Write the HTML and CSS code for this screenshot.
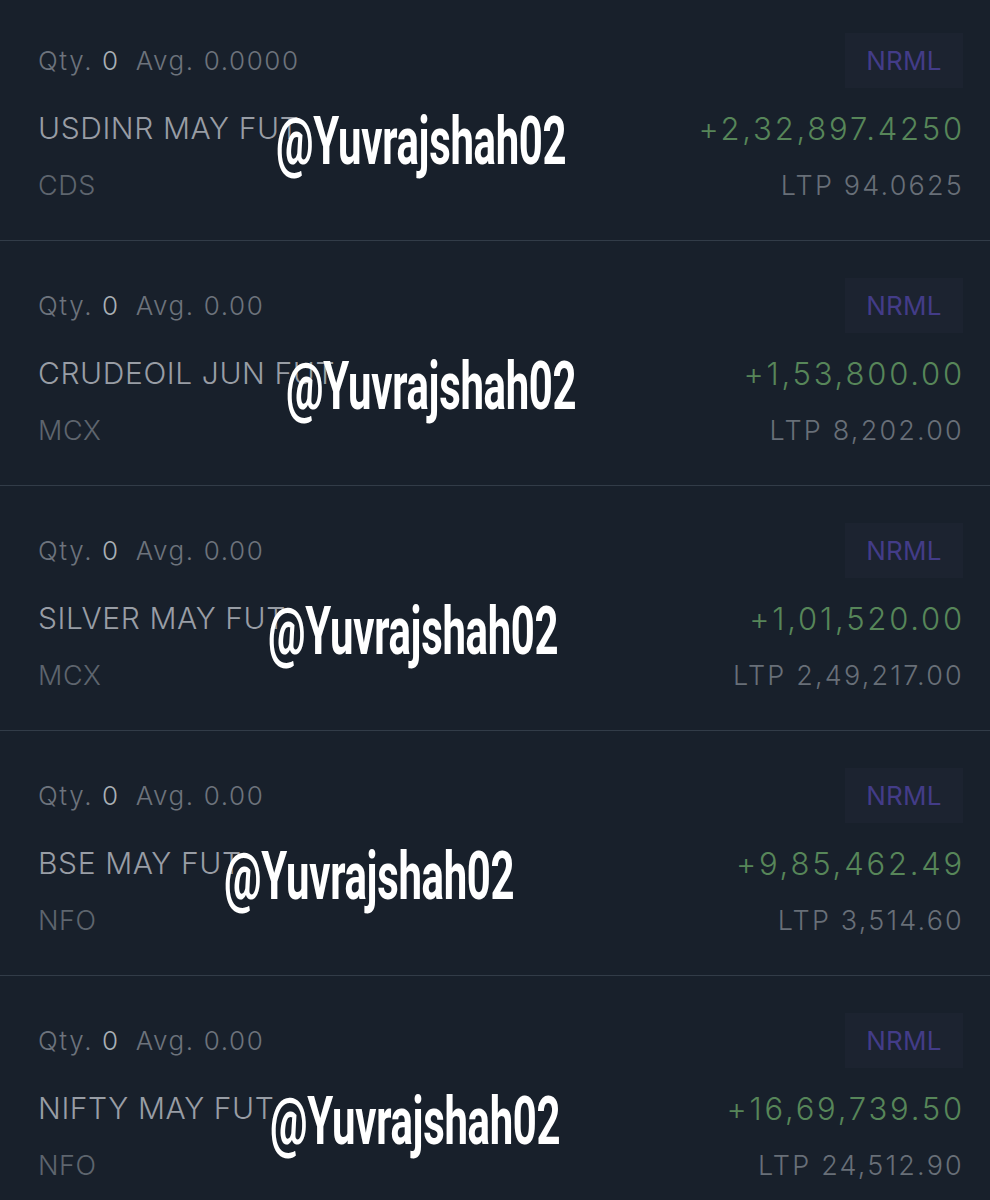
FILE: index.html
```html
<!DOCTYPE html>
<html>
<head>
<meta charset="utf-8">
<link rel="stylesheet" href="styles.css">
</head>
<body>
<div class="list">
  <div class="row">
    <div class="line top">
      <div class="qty"><span class="lbl">Qty.</span> <span class="val">0</span><span class="lbl avg">Avg.</span> <span class="lbl">0.0000</span></div>
      <div class="tag">NRML</div>
    </div>
    <div class="line mid">
      <div class="name">USDINR MAY FUT</div>
      <div class="pnl">+2,32,897.4250</div>
    </div>
    <div class="line bot">
      <div class="exch">CDS</div>
      <div class="ltp">LTP 94.0625</div>
    </div>
    <div class="wm wm1">@Yuvrajshah02</div>
  </div>
  <div class="row">
    <div class="line top">
      <div class="qty"><span class="lbl">Qty.</span> <span class="val">0</span><span class="lbl avg">Avg.</span> <span class="lbl">0.00</span></div>
      <div class="tag">NRML</div>
    </div>
    <div class="line mid">
      <div class="name">CRUDEOIL JUN FUT</div>
      <div class="pnl">+1,53,800.00</div>
    </div>
    <div class="line bot">
      <div class="exch">MCX</div>
      <div class="ltp">LTP 8,202.00</div>
    </div>
    <div class="wm wm2">@Yuvrajshah02</div>
  </div>
  <div class="row">
    <div class="line top">
      <div class="qty"><span class="lbl">Qty.</span> <span class="val">0</span><span class="lbl avg">Avg.</span> <span class="lbl">0.00</span></div>
      <div class="tag">NRML</div>
    </div>
    <div class="line mid">
      <div class="name">SILVER MAY FUT</div>
      <div class="pnl">+1,01,520.00</div>
    </div>
    <div class="line bot">
      <div class="exch">MCX</div>
      <div class="ltp">LTP 2,49,217.00</div>
    </div>
    <div class="wm wm3">@Yuvrajshah02</div>
  </div>
  <div class="row">
    <div class="line top">
      <div class="qty"><span class="lbl">Qty.</span> <span class="val">0</span><span class="lbl avg">Avg.</span> <span class="lbl">0.00</span></div>
      <div class="tag">NRML</div>
    </div>
    <div class="line mid">
      <div class="name">BSE MAY FUT</div>
      <div class="pnl">+9,85,462.49</div>
    </div>
    <div class="line bot">
      <div class="exch">NFO</div>
      <div class="ltp">LTP 3,514.60</div>
    </div>
    <div class="wm wm4">@Yuvrajshah02</div>
  </div>
  <div class="row">
    <div class="line top">
      <div class="qty"><span class="lbl">Qty.</span> <span class="val">0</span><span class="lbl avg">Avg.</span> <span class="lbl">0.00</span></div>
      <div class="tag">NRML</div>
    </div>
    <div class="line mid">
      <div class="name">NIFTY MAY FUT</div>
      <div class="pnl">+16,69,739.50</div>
    </div>
    <div class="line bot">
      <div class="exch">NFO</div>
      <div class="ltp">LTP 24,512.90</div>
    </div>
    <div class="wm wm5">@Yuvrajshah02</div>
  </div>
</div>
</body>
</html>
```
FILE: styles.css
```css
html, body {
  margin: 0;
  padding: 0;
  background: #18202b;
}
body {
  width: 990px;
  height: 1200px;
  overflow: hidden;
  font-family: Inter, "Noto Sans", sans-serif;
  font-weight: 300;
}
.list {
  margin-top: -4px;
}
.row {
  position: relative;
  height: 244px;
  border-bottom: 1px solid #323c48;
  padding: 0 28px 0 38px;
  box-sizing: content-box;
}
.line {
  display: flex;
  justify-content: space-between;
  align-items: center;
}
.top {
  height: 55px;
  padding-top: 37px;
}
.mid {
  height: 40px;
  margin-top: 20px;
}
.bot {
  height: 30px;
  margin-top: 22px;
}
.qty {
  font-size: 26px;
  letter-spacing: 1.6px;
  color: #6d737c;
}
.qty .val {
  color: #aab0b6;
}
.qty .avg {
  margin-left: 16px;
}
.tag {
  height: 55px;
  width: 118px;
  box-sizing: border-box;
  background: #1c2330;
  color: #433c88;
  font-size: 26px;
  font-weight: 400;
  letter-spacing: 0.3px;
  display: flex;
  align-items: center;
  justify-content: center;
  margin-right: -1px;
}
.name {
  font-size: 30px;
  letter-spacing: 0.6px;
  color: #989da5;
}
.pnl {
  font-size: 31px;
  letter-spacing: 2.8px;
  color: #578659;
  margin-right: -3px;
}
.exch {
  font-size: 27px;
  letter-spacing: 0.6px;
  color: #5e656e;
}
.ltp {
  font-size: 27px;
  letter-spacing: 2.2px;
  color: #686f78;
  margin-right: -2px;
}
.wm {
  position: absolute;
  top: 113px;
  font-family: Roboto, sans-serif;
  font-weight: 700;
  font-size: 66px;
  line-height: 1;
  color: #ffffff;
  transform: scaleX(0.635);
  transform-origin: left top;
  letter-spacing: -0.5px;
  white-space: nowrap;
}
.wm1 { left: 276px; }
.wm2 { left: 286px; }
.wm3 { left: 268px; }
.wm4 { left: 224px; }
.wm5 { left: 270px; }
```
